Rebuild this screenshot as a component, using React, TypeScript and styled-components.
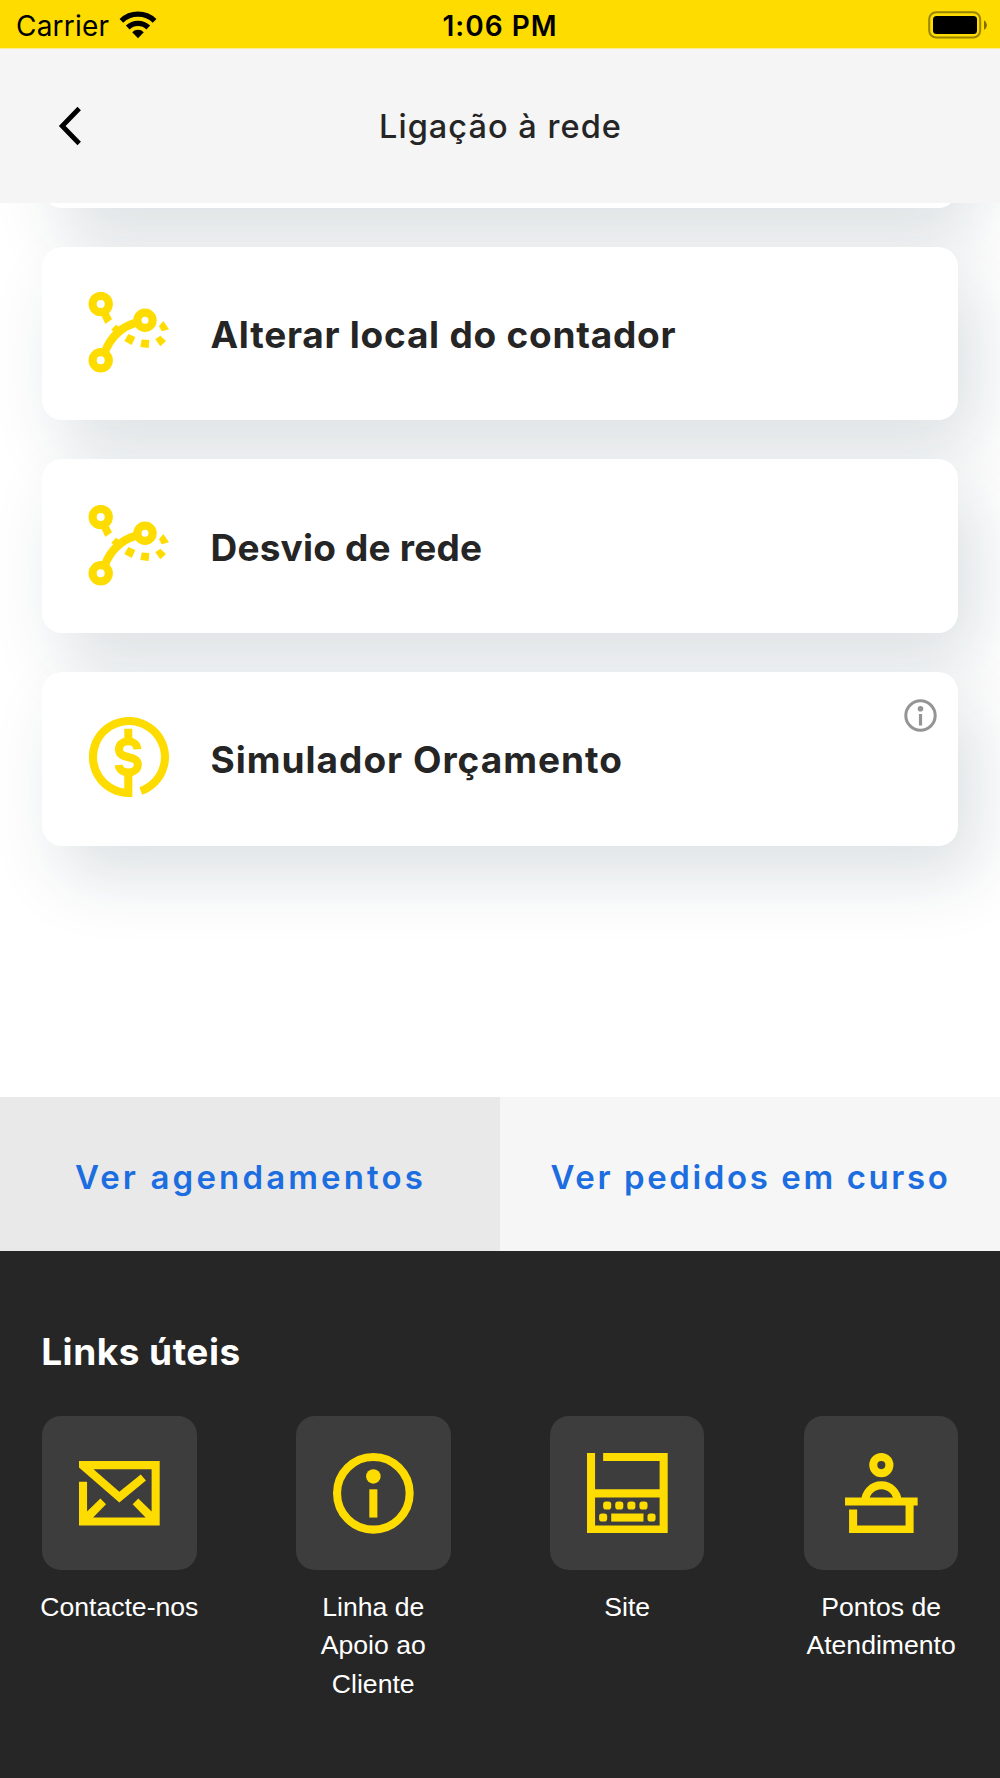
import React from "react";
import styled, { createGlobalStyle } from "styled-components";

const YELLOW = "#ffdc00";
const BRAND_FONT = `Inter, "Open Sans", sans-serif`;
const SYSTEM_FONT = `Inter, Roboto, sans-serif`;

const GlobalStyle = createGlobalStyle`
  *, *::before, *::after { box-sizing: border-box; }
  body { margin: 0; background: #fff; }
`;

const Screen = styled.div`
  display: flex;
  flex-direction: column;
  width: 1000px;
  height: 1778px;
  overflow: hidden;
  background: #fff;
`;

const StatusBar = styled.div`
  display: grid;
  grid-template-columns: 1fr auto 1fr;
  align-items: center;
  flex: none;
  height: 49px;
  padding: 0 13px 0 15px;
  background: ${YELLOW};
  border-bottom: 1px solid #fbed90;
  color: #000;
  font-family: ${SYSTEM_FONT};
`;

const Carrier = styled.div`
  display: flex;
  align-items: center;
  gap: 10px;
  font-size: 28px;
  line-height: 48px;
`;

const CarrierName = styled.span`
  padding: 2px 0 0 1px;
  letter-spacing: 0.2px;
`;

const Clock = styled.div`
  padding: 2px 2px 0 0;
  font-size: 28px;
  font-weight: 600;
  line-height: 48px;
  letter-spacing: 1px;
`;

const StatusEnd = styled.div`
  display: flex;
  justify-content: flex-end;
`;

const Header = styled.header`
  display: grid;
  grid-template-columns: 58px 1fr 58px;
  align-items: center;
  flex: none;
  height: 154px;
  padding: 0 42px;
  background: #f5f5f5;
`;

const BackButton = styled.button`
  display: flex;
  padding: 0 0 0 16px;
  border: 0;
  background: none;
`;

const Title = styled.h1`
  margin: 0;
  padding: 2px 0 0 1px;
  text-align: center;
  color: #252525;
  font-family: ${BRAND_FONT};
  font-size: 32.5px;
  font-weight: 500;
  line-height: 44px;
  letter-spacing: 1.05px;
`;

const ScrollArea = styled.main`
  display: flex;
  flex-direction: column;
  justify-content: flex-end;
  gap: 38.8px;
  flex: none;
  height: 894px;
  padding: 0 42px 251.5px;
  overflow: hidden;
`;

const Card = styled.section`
  display: flex;
  align-items: center;
  gap: 41.5px;
  position: relative;
  flex: none;
  height: 173.8px;
  padding: 0 46px;
  border-radius: 20px;
  background: #fff;
  box-shadow: 19px 30px 68px rgba(14, 46, 60, 0.145);
`;

const CardIcon = styled.span`
  display: flex;
  padding-bottom: 2px;
`;

const CardLabel = styled.h2<{ $spacing: number }>`
  margin: 0;
  padding-top: 3px;
  color: #252525;
  font-family: ${BRAND_FONT};
  font-size: 37px;
  font-weight: 700;
  line-height: 48px;
  letter-spacing: ${(p) => p.$spacing}px;
  white-space: nowrap;
`;

const InfoBadge = styled.span`
  display: flex;
  position: absolute;
  top: 27px;
  right: 21px;
`;

const Tabs = styled.nav`
  display: grid;
  grid-template-columns: 1fr 1fr;
  flex: none;
  height: 154px;
`;

const Tab = styled.button<{ $active?: boolean; $spacing: number }>`
  padding: 6px 0 0 1px;
  border: 0;
  background: ${(p) => (p.$active ? "#e9e9e9" : "#f6f6f6")};
  color: #1c6ee0;
  font-family: ${BRAND_FONT};
  font-size: 33px;
  font-weight: 600;
  line-height: 44px;
  letter-spacing: ${(p) => p.$spacing}px;
  white-space: nowrap;
`;

const Footer = styled.footer`
  flex: 1;
  padding: 77px 38.4px 0 38.8px;
  background: #262626;
  color: #fff;
`;

const FooterTitle = styled.h2`
  margin: 0 0 39.6px 2.4px;
  font-family: ${BRAND_FONT};
  font-size: 37px;
  font-weight: 700;
  line-height: 48px;
  letter-spacing: 0.5px;
`;

const Links = styled.div`
  display: flex;
  justify-content: space-between;
`;

const LinkItem = styled.div`
  display: flex;
  flex-direction: column;
  align-items: center;
  width: 161px;
`;

const Tile = styled.div`
  display: flex;
  align-items: center;
  justify-content: center;
  width: 154.6px;
  height: 154.6px;
  border-radius: 19px;
  background: #3d3d3d;
`;

const LinkLabel = styled.span`
  margin-top: 17.6px;
  text-align: center;
  font-family: "Liberation Sans", Arial, sans-serif;
  font-size: 26.6px;
  line-height: 38.7px;
`;

const WifiIcon = () => (
  <svg width="38" height="28" viewBox="0 0 38 28">
    <g fill="none" stroke="#000" strokeWidth="5.3">
      <path d="M2.4 9.8A24 24 0 0 1 35.6 9.8" />
      <path d="M8.7 16.5A15 15 0 0 1 29.3 16.5" />
    </g>
    <path d="M13.2 21.2A8.3 8.3 0 0 1 24.8 21.2L19 27.2Z" />
  </svg>
);

const BatteryIcon = () => (
  <svg width="59" height="28" viewBox="0 0 59 28">
    <rect x="1.2" y="1.2" width="51" height="25.4" rx="7" fill="none" stroke="#998400" strokeWidth="2" />
    <rect x="5" y="5" width="44" height="18" rx="3.5" />
    <path d="M56 9.2Q59 11 59 14T56 19Z" fill="#7f6e00" />
  </svg>
);

const BackIcon = () => (
  <svg width="24" height="40" viewBox="0 0 24 40">
    <path d="M21.2 2.5L4.2 20L21.2 37.5" fill="none" stroke="#000" strokeWidth="4.8" />
  </svg>
);

const RouteIcon = () => (
  <svg width="81" height="81" viewBox="0 0 81 81" fill={YELLOW}>
    <g fill="none" stroke={YELLOW} strokeWidth="8.2">
      <circle cx="12.7" cy="12" r="8.1" />
      <circle cx="12.7" cy="68.3" r="8.1" />
      <circle cx="57" cy="28.3" r="7.6" />
      <path d="M17 59.5Q26 37.5 47 31" />
    </g>
    <path d="M13 22.5L17.3 32L24 27.3L19.3 18Z" />
    <path d="M23.3 37.7L28 32.7L32 35.7L27 40.7Z" />
    <path d="M40.3 42L47.3 45L43.7 53L36.3 49Z" />
    <path d="M53.7 47.5L61.3 48L60.7 56L52.3 55Z" />
    <path d="M72.3 43.7L78 49L72.3 54.3L67.3 47.3Z" />
    <path d="M75.3 29L81 37.3L73.7 39.3L71 34.3Z" />
  </svg>
);

const BudgetIcon = () => (
  <svg width="81" height="81" viewBox="0.6 0.2 81 81" fill="none" stroke={YELLOW} strokeWidth="8.1">
    <path d="M40.9 58V76.2A36 36 0 1 1 53.4 74.2" strokeLinejoin="miter" />
    <path d="M40.9 12V24M50 32.4C49.3 21.5 31.6 22 31.6 32.6C31.6 43.5 50.4 37.5 50.4 47.6C50.4 58 32 58.4 31.4 48.3" strokeWidth="8" />
  </svg>
);

const MailIcon = () => (
  <svg width="80.7" height="80.7" viewBox="0 0 20 20" fill={YELLOW}>
    <path d="M0 2H20V18H0V7.1H2V14.5L5.3 11.3L6.7 12.7L3.5 16H16.5L13.3 12.7L14.7 11.3L18 14.5V4H3.6L10 9.6L15.3 5.3L16.6 6.8L10 12.3L0 3.6Z" />
  </svg>
);

const InfoIcon = () => (
  <svg width="80.7" height="80.7" viewBox="0 0 20 20" fill={YELLOW} overflow="visible">
    <circle cx="10" cy="10" r="9" fill="none" stroke={YELLOW} strokeWidth="2" />
    <circle cx="10" cy="5.8" r="1.8" />
    <rect x="9" y="9" width="2" height="7" />
  </svg>
);

const SmallInfoIcon = () => (
  <svg width="33" height="33" viewBox="0 0 33 33" fill="#949494">
    <circle cx="16.5" cy="16.5" r="14.7" fill="none" stroke="#949494" strokeWidth="3" />
    <circle cx="16.5" cy="9.7" r="2.8" />
    <rect x="14.9" y="15" width="3.2" height="11.5" />
  </svg>
);

const LaptopIcon = () => (
  <svg width="80.7" height="80.7" viewBox="0 0 20 20" fill={YELLOW}>
    <path d="M0 0H2V9H18V2H4V0H20V20H0ZM2 11V18H18V11Z" fillRule="evenodd" />
    {[4, 7, 10, 13].map((x) => (
      <rect key={x} x={x} y="12" width="2" height="2" rx="0.7" />
    ))}
    <rect x="3" y="15" width="2" height="2" rx="0.7" />
    <rect x="6" y="15" width="8" height="2" />
    <rect x="15" y="15" width="2" height="2" rx="0.7" />
  </svg>
);

const DeskIcon = () => (
  <svg width="80.7" height="80.7" viewBox="0 0 20 20" fill="none" stroke={YELLOW} strokeWidth="2">
    <circle cx="10" cy="3" r="2" />
    <path d="M6 12A4 4 0 0 1 14 12" />
    <path d="M1 12H19M3 14V19H17V12" />
  </svg>
);

const cards = [
  { label: "Alterar local do contador", icon: <RouteIcon />, spacing: 0.75 },
  { label: "Desvio de rede", icon: <RouteIcon />, spacing: 0.2 },
  { label: "Simulador Orçamento", icon: <BudgetIcon />, spacing: 1, info: true },
];

const links = [
  { label: "Contacte-nos", icon: <MailIcon /> },
  { label: "Linha de Apoio ao Cliente", icon: <InfoIcon /> },
  { label: "Site", icon: <LaptopIcon /> },
  { label: "Pontos de Atendimento", icon: <DeskIcon /> },
];

export default function App() {
  return (
    <>
      <GlobalStyle />
      <Screen>
        <StatusBar>
          <Carrier>
            <CarrierName>Carrier</CarrierName>
            <WifiIcon />
          </Carrier>
          <Clock>1:06 PM</Clock>
          <StatusEnd>
            <BatteryIcon />
          </StatusEnd>
        </StatusBar>
        <Header>
          <BackButton aria-label="Voltar">
            <BackIcon />
          </BackButton>
          <Title>Ligação à rede</Title>
        </Header>
        <ScrollArea>
          <Card />
          {cards.map((card) => (
            <Card key={card.label}>
              <CardIcon>{card.icon}</CardIcon>
              <CardLabel $spacing={card.spacing}>{card.label}</CardLabel>
              {card.info && (
                <InfoBadge>
                  <SmallInfoIcon />
                </InfoBadge>
              )}
            </Card>
          ))}
        </ScrollArea>
        <Tabs>
          <Tab $active $spacing={3.15}>Ver agendamentos</Tab>
          <Tab $spacing={2.6}>Ver pedidos em curso</Tab>
        </Tabs>
        <Footer>
          <FooterTitle>Links úteis</FooterTitle>
          <Links>
            {links.map((link) => (
              <LinkItem key={link.label}>
                <Tile>{link.icon}</Tile>
                <LinkLabel>{link.label}</LinkLabel>
              </LinkItem>
            ))}
          </Links>
        </Footer>
      </Screen>
    </>
  );
}
